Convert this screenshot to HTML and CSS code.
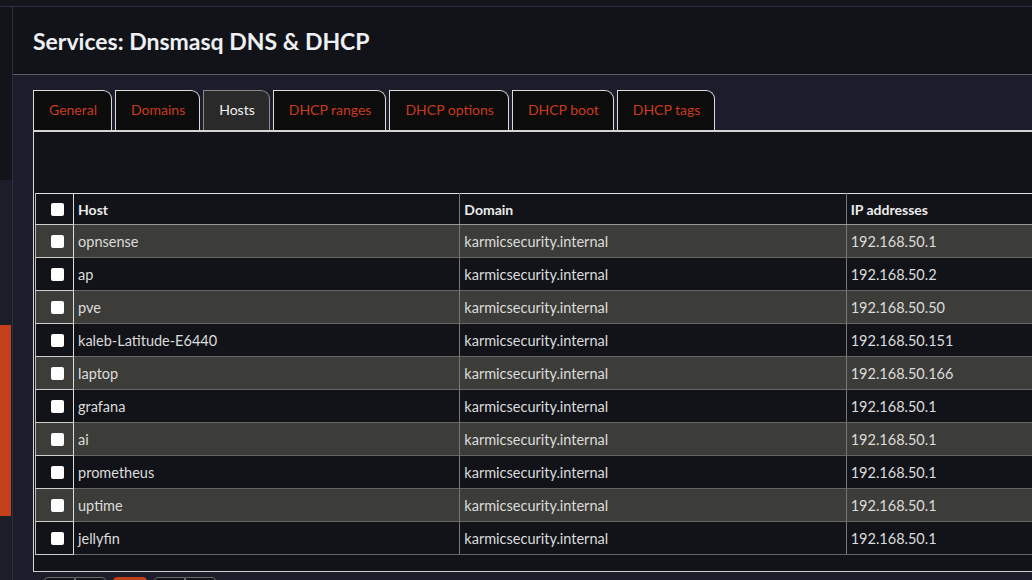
FILE: index.html
```html
<!DOCTYPE html>
<html lang="en">
<head>
  <meta charset="UTF-8">
  <meta name="viewport" content="width=device-width, initial-scale=1.0">
  <title>Services: Dnsmasq DNS &amp; DHCP</title>
  <link rel="stylesheet" href="styles.css">
</head>
<body>
  <div class="topbar"></div>
  <div class="layout">
    <!-- collapsed navigation -->
    <div class="sidebar">
      <div class="side-top"></div>
      <div class="side-bottom">
        <div class="side-active"></div>
      </div>
    </div>

    <div class="main">
      <div class="page-header">
        <h1>Services: Dnsmasq DNS &amp; DHCP</h1>
      </div>

      <div class="content">
        <ul class="tabs">
          <li class="tab">General</li>
          <li class="tab">Domains</li>
          <li class="tab active">Hosts</li>
          <li class="tab">DHCP ranges</li>
          <li class="tab">DHCP options</li>
          <li class="tab">DHCP boot</li>
          <li class="tab">DHCP tags</li>
        </ul>

        <div class="tab-box">
          <table class="grid">
            <colgroup>
              <col class="col-select">
              <col class="col-text">
              <col class="col-text">
              <col class="col-text">
            </colgroup>
            <thead>
              <tr>
                <th class="select"><input type="checkbox"></th>
                <th>Host</th>
                <th>Domain</th>
                <th>IP addresses</th>
              </tr>
            </thead>
            <tbody id="hosts"></tbody>
          </table>
        </div>

        <div class="pager">
          <div class="pager-group">
            <span class="page-btn"></span>
            <span class="page-btn"></span>
          </div>
          <span class="page-btn current"></span>
          <div class="pager-group">
            <span class="page-btn"></span>
            <span class="page-btn"></span>
          </div>
        </div>
      </div>
    </div>
  </div>

  <script>
// host overrides
var hosts = [
  ["opnsense", "karmicsecurity.internal", "192.168.50.1"],
  ["ap", "karmicsecurity.internal", "192.168.50.2"],
  ["pve", "karmicsecurity.internal", "192.168.50.50"],
  ["kaleb-Latitude-E6440", "karmicsecurity.internal", "192.168.50.151"],
  ["laptop", "karmicsecurity.internal", "192.168.50.166"],
  ["grafana", "karmicsecurity.internal", "192.168.50.1"],
  ["ai", "karmicsecurity.internal", "192.168.50.1"],
  ["prometheus", "karmicsecurity.internal", "192.168.50.1"],
  ["uptime", "karmicsecurity.internal", "192.168.50.1"],
  ["jellyfin", "karmicsecurity.internal", "192.168.50.1"]
];

var tbody = document.getElementById("hosts");
hosts.forEach(function(h) {
  var row = document.createElement("tr");
  var sel = document.createElement("td");
  sel.className = "select";
  sel.innerHTML = '<input type="checkbox">';
  row.appendChild(sel);
  h.forEach(function(value) {
    var cell = document.createElement("td");
    cell.textContent = value;
    row.appendChild(cell);
  });
  tbody.appendChild(row);
});
  </script>
</body>
</html>
```

FILE: styles.css
```css
body {
  margin: 0;
  height: 580px;
  overflow: hidden;
  background-color: #15161b;
  font-family: Lato, "Liberation Sans", sans-serif;
  font-size: 14px;
  color: #dcdcdc;
}

.topbar {
  height: 6px;
  background-color: #15161b;
  border-bottom: 1px solid #2c2f42;
}

.layout {
  display: flex;
  height: 573px;
  overflow: hidden;
}

.sidebar {
  width: 12px;
  flex-shrink: 0;
  display: flex;
  flex-direction: column;
}

.side-top {
  height: 173px;
  background-color: #131419;
}

.side-bottom {
  flex: 1;
  padding-top: 145px;
  background-color: #1b1d28;
}

.side-active {
  width: 11px;
  height: 191px;
  background-color: #c3401a;
}

.main {
  width: 1260px;
  flex-shrink: 0;
  border-left: 1px solid #2c2f42;
}

.page-header {
  height: 67px;
  display: flex;
  align-items: center;
  padding-left: 20px;
  background-color: #121318;
  border-bottom: 1px solid #5b5d68;
}

.page-header h1 {
  margin: 0;
  font-size: 23px;
  font-weight: bold;
  color: #eef0f4;
}

.content {
  padding: 15px 0 0 20px;
  background-color: #1b1d2a;
  height: 600px;
}

.tabs {
  display: flex;
  gap: 3px;
  margin: 0;
  padding: 0;
  list-style: none;
  border-bottom: 2px solid #d4d4d4;
}

.tab {
  height: 39px;
  line-height: 38px;
  padding: 0 14px 0 15px;
  background-color: #0c0c0c;
  color: #c93b1c;
  border: 1px solid #dcdcdc;
  border-bottom: none;
  border-top-right-radius: 9px;
}

.tab.active {
  background-color: #2a2a2a;
  border-color: #8a8a8a;
  color: #f2f2f2;
}

.tab-box {
  padding: 61px 0 16px 1px;
  background-color: #121318;
  border-left: 1px solid #d8d8d8;
  border-bottom: 1px solid #cfcfcf;
}

.grid {
  border-collapse: collapse;
  table-layout: fixed;
  width: 1198px;
  border-top: 1px solid #dedede;
}

.col-select {
  width: 38px;
}

.col-text {
  width: 386px;
}

.grid th,
.grid td {
  padding: 0 4px;
  text-align: left;
  white-space: nowrap;
  border-bottom: 1px solid #666;
  border-right: 1px solid #777;
}

.grid th {
  height: 30px;
  font-weight: bold;
  color: #ececec;
  border-bottom-color: #9a9a9a;
}

.grid td {
  height: 32px;
  font-size: 14.5px;
}

.grid .select {
  padding: 0 0 0 6px;
  text-align: center;
  border-left: 1px solid #bbb;
  border-right-color: #dcdcdc;
  border-bottom-color: #cfcfcf;
}

.grid tbody tr:nth-child(odd) {
  background-color: #3c3c39;
}

.grid tbody tr:nth-child(even) {
  background-color: #121318;
}

input[type="checkbox"] {
  appearance: none;
  display: block;
  width: 13px;
  height: 13px;
  margin: 0 auto;
  background-color: #fff;
  border-radius: 2px;
}

.pager {
  display: flex;
  gap: 7px;
  margin-top: 5px;
  padding-left: 11px;
}

.pager-group {
  display: flex;
}

.page-btn {
  width: 29px;
  height: 30px;
  border: 1px solid #6a6a6a;
  background-color: #121318;
}

.pager-group .page-btn:first-child {
  border-top-left-radius: 4px;
}

.pager-group .page-btn:last-child {
  border-top-right-radius: 4px;
}

.page-btn.current {
  width: 32px;
  border-color: #c3401a;
  background-color: #c3401a;
  border-radius: 4px;
}
```
